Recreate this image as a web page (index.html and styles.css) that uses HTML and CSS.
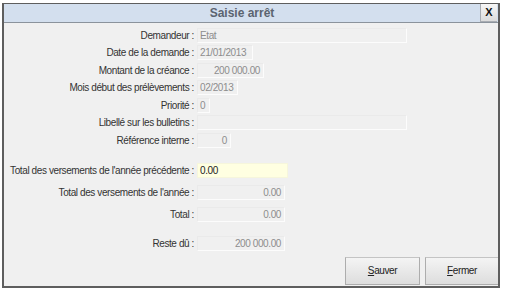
FILE: index.html
```html
<!DOCTYPE html>
<html lang="fr">
<head>
<meta charset="utf-8">
<title>Saisie arrêt</title>
<link rel="stylesheet" href="styles.css">
</head>
<body>
<div class="window">
  <div class="titlebar">
    <div class="title">Saisie arrêt</div>
    <div class="close">X</div>
  </div>
  <div class="content">
    <div class="section first">
      <div class="row"><div class="label">Demandeur :</div><div class="field w-wide">Etat</div></div>
      <div class="row"><div class="label">Date de la demande :</div><div class="field w-date">21/01/2013</div></div>
      <div class="row"><div class="label">Montant de la créance :</div><div class="field w-amount right">200 000.00</div></div>
      <div class="row"><div class="label">Mois début des prélèvements :</div><div class="field w-month">02/2013</div></div>
      <div class="row"><div class="label">Priorité :</div><div class="field w-prio">0</div></div>
      <div class="row"><div class="label">Libellé sur les bulletins :</div><div class="field w-wide"></div></div>
      <div class="row"><div class="label">Référence interne :</div><div class="field w-ref right">0</div></div>
    </div>
    <div class="section second">
      <div class="row tall"><div class="label">Total des versements de l'année précédente :</div><div class="field w-input editable">0.00</div></div>
      <div class="row tall"><div class="label">Total des versements de l'année :</div><div class="field w-total right">0.00</div></div>
      <div class="row tall"><div class="label">Total :</div><div class="field w-total right">0.00</div></div>
    </div>
    <div class="section third">
      <div class="row tall"><div class="label">Reste dû :</div><div class="field w-total right">200 000.00</div></div>
    </div>
    <div class="actions">
      <div class="button"><u>S</u>auver</div>
      <div class="button narrow"><u>F</u>ermer</div>
    </div>
  </div>
</div>
</body>
</html>
```
FILE: styles.css
```css
html, body {
  margin: 0;
  padding: 0;
  background: #ffffff;
}
body {
  font-family: "Liberation Sans", Arial, sans-serif;
  font-size: 10px;
  letter-spacing: -0.4px;
  color: #333333;
}
.window {
  box-sizing: border-box;
  margin: 3px 0 0 2px;
  width: 498px;
  height: 285px;
  border: 2px solid #5e5e5e;
  border-top-width: 1px;
  background: #f0f0f0;
  display: flex;
  flex-direction: column;
  overflow: hidden;
}
.titlebar {
  display: flex;
  height: 18px;
  background: #d3dfee;
  border-bottom: 1px solid #8b939c;
  flex: none;
}
.title {
  flex: 1;
  text-align: center;
  font-weight: bold;
  font-size: 12px;
  letter-spacing: 0;
  line-height: 18px;
  color: #5b6470;
}
.close {
  width: 17px;
  margin-right: 1px;
  box-sizing: border-box;
  border-left: 1px solid #a8acb2;
  border-bottom: 1px solid #a8acb2;
  background: linear-gradient(#f6f6f6, #dcdcdc);
  text-align: center;
  font-weight: bold;
  font-size: 11px;
  letter-spacing: 0;
  line-height: 17px;
  color: #111111;
}
.content {
  flex: 1;
  display: flex;
  flex-direction: column;
}
.section.first {
  padding-top: 3.5px;
}
.section.second {
  margin-top: 10px;
}
.section.third {
  margin-top: 7px;
}
.row {
  display: flex;
  align-items: center;
  height: 17.5px;
}
.row.tall {
  height: 22px;
}
.label {
  width: 190px;
  text-align: right;
  white-space: nowrap;
  line-height: 13px;
  color: #333333;
}
.field {
  box-sizing: border-box;
  margin-left: 3px;
  height: 15px;
  padding: 0 3px 0 2px;
  line-height: 13px;
  color: #8d8d8d;
  white-space: nowrap;
  border: 1px solid;
  border-color: #eaeaea #fcfcfc #fcfcfc #eaeaea;
}
.field.right {
  text-align: right;
}
.field.editable {
  background: #ffffe1;
  color: #222222;
  border-color: #f6f6dc;
}
.w-wide { width: 210px; }
.w-date { width: 56px; }
.w-amount { width: 67px; }
.w-month { width: 41px; }
.w-prio { width: 13px; }
.w-ref { width: 34px; }
.w-input { width: 91px; }
.w-total { width: 88px; }
.actions {
  margin-top: auto;
  padding-bottom: 1px;
  display: flex;
  justify-content: flex-end;
  gap: 5px;
}
.button {
  box-sizing: border-box;
  width: 75px;
  height: 28px;
  border: 1px solid #adadad;
  border-top-color: #c4c4c4;
  background: linear-gradient(#f4f4f4, #dddddd);
  text-align: center;
  line-height: 26px;
  color: #222222;
}
.button.narrow {
  width: 73px;
  border-right: none;
}
```
